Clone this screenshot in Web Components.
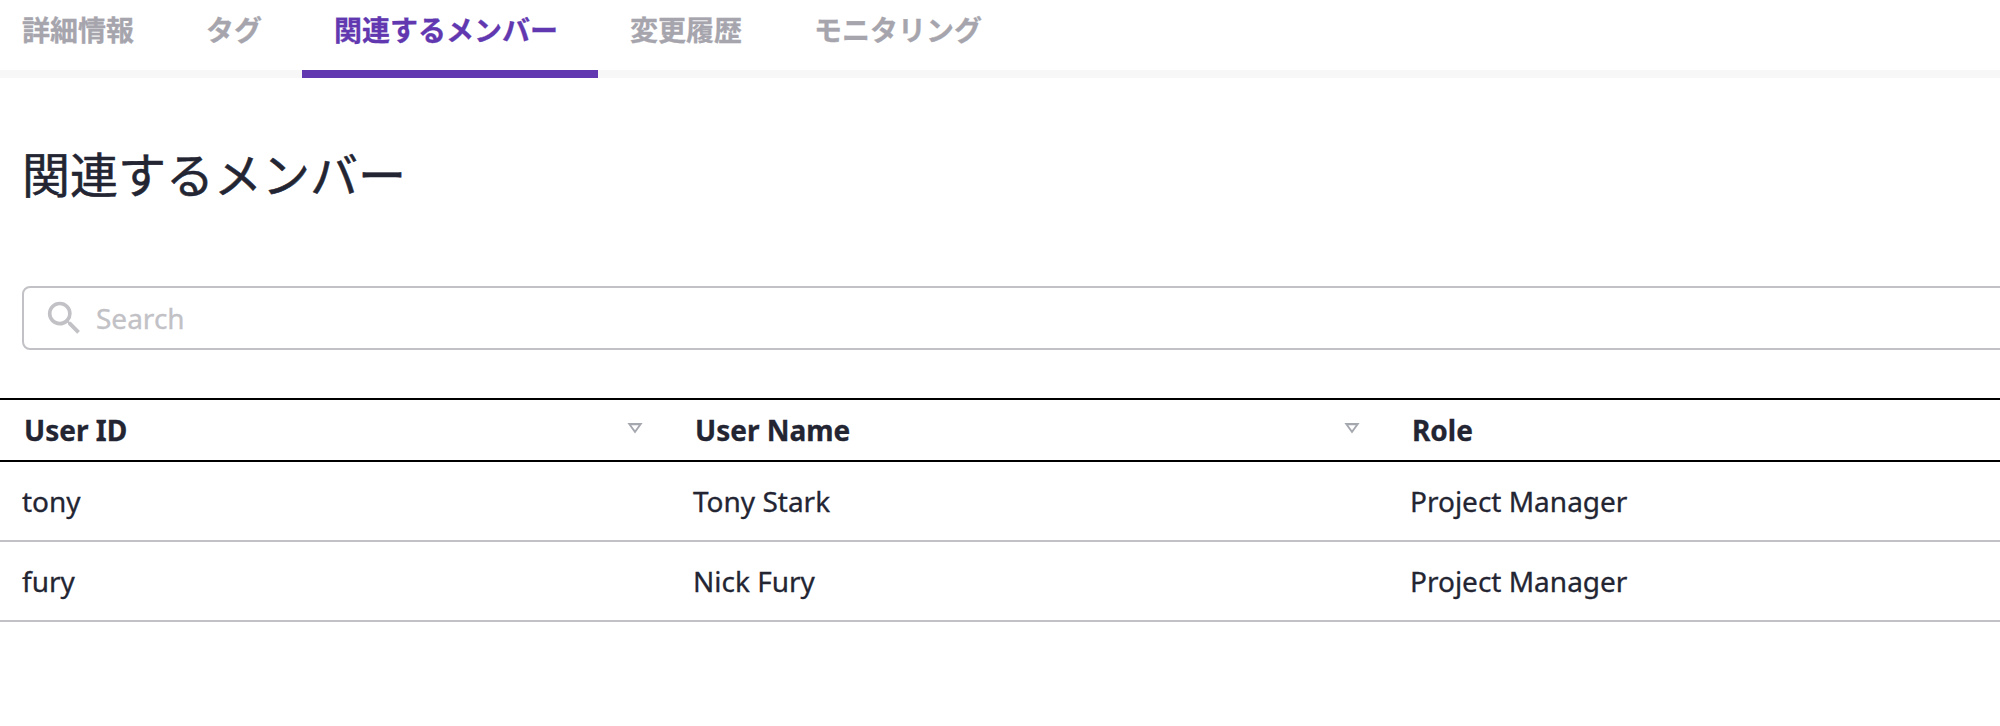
<!DOCTYPE html>
<html lang="ja"><head><meta charset="utf-8"><title>関連するメンバー</title>
<style>body{margin:0;background:#fff;overflow:hidden;font-family:"Noto Sans","Noto Sans CJK JP",sans-serif;color:#232533}</style></head><body>
<member-page></member-page>
<script>
const define=(name,html)=>customElements.define(name,class extends HTMLElement{constructor(){super();this.attachShadow({mode:'open'}).innerHTML=html;}});
define('tab-item',`<style>:host{display:block;box-sizing:border-box;height:78px;padding:8px 40px 0 32px;border-bottom:8px solid #f7f7f7;color:#a6a5ad;font:700 28px/42px "Noto Sans CJK JP",sans-serif;-webkit-text-stroke:.3px currentColor;white-space:nowrap}:host([active]){color:#6138b0;border-color:#6138b0}</style><slot></slot>`);
define('tab-bar',`<style>:host{display:flex;height:78px;box-shadow:inset 0 -8px #f7f7f7}::slotted(:first-child){padding-left:22px!important}</style><slot></slot>`);
define('page-title',`<style>:host{display:block;margin:59px 0 0 22px;font:400 48px/70px "Noto Sans CJK JP",sans-serif;-webkit-text-stroke:.55px currentColor}</style><slot></slot>`);
define('search-box',`<style>:host{display:flex;align-items:center;box-sizing:border-box;width:2020px;height:64px;margin:79px 0 0 22px;padding-left:18px;border:2px solid #c1c1c6;border-radius:8px;color:#c1c1c6;font-size:28px;-webkit-text-stroke:.3px currentColor}svg{width:44px;height:44px;margin-right:10px}</style><svg viewBox="0 0 24 24" fill="currentColor"><path transform="translate(.2 .1)" d="M15.5 14h-.79l-.28-.27A6.47 6.47 0 0 0 16 9.5 6.5 6.5 0 1 0 9.5 16c1.61 0 3.09-.59 4.23-1.57l.27.28v.79l5 4.99L20.49 19l-4.99-5zm-6 0C7.01 14 5 11.99 5 9.5S7.01 5 9.5 5 14 7.01 14 9.5 11.99 14 9.5 14z"/></svg><slot></slot>`);
define('table-cell',`<style>:host{display:flex;align-items:center;justify-content:space-between;padding:0 28px 0 22px;font-size:28px;-webkit-text-stroke:.3px currentColor}:host([head]){font-weight:700;padding-left:24px}svg{display:none;width:16px;height:12px;margin-bottom:4px}:host([sort]) svg{display:block}</style><slot></slot><svg viewBox="0 0 16 12"><path d="M.4 1h15.2L8 11.5zM4.3 3.2L8 8.2 11.7 3.2z" fill="#a6a8b0" fill-rule="evenodd"/></svg>`);
define('table-row',`<style>:host{display:grid;grid-template-columns:671px 717px 1fr;box-sizing:border-box;height:80px;border-bottom:2px solid #c1c1c6}:host([head]){height:64px;margin-top:48px;border-top:2px solid #000;border-color:#000}</style><slot></slot>`);
define('member-page',`<style>:host{display:block;height:726px;overflow:hidden}</style>
<tab-bar><tab-item>詳細情報</tab-item><tab-item>タグ</tab-item><tab-item active>関連するメンバー</tab-item><tab-item>変更履歴</tab-item><tab-item>モニタリング</tab-item></tab-bar>
<page-title>関連するメンバー</page-title><search-box>Search</search-box>
<table-row head><table-cell head sort>User ID</table-cell><table-cell head sort>User Name</table-cell><table-cell head>Role</table-cell></table-row>
<table-row><table-cell>tony</table-cell><table-cell>Tony Stark</table-cell><table-cell>Project Manager</table-cell></table-row>
<table-row><table-cell>fury</table-cell><table-cell>Nick Fury</table-cell><table-cell>Project Manager</table-cell></table-row>`);
</script></body></html>
